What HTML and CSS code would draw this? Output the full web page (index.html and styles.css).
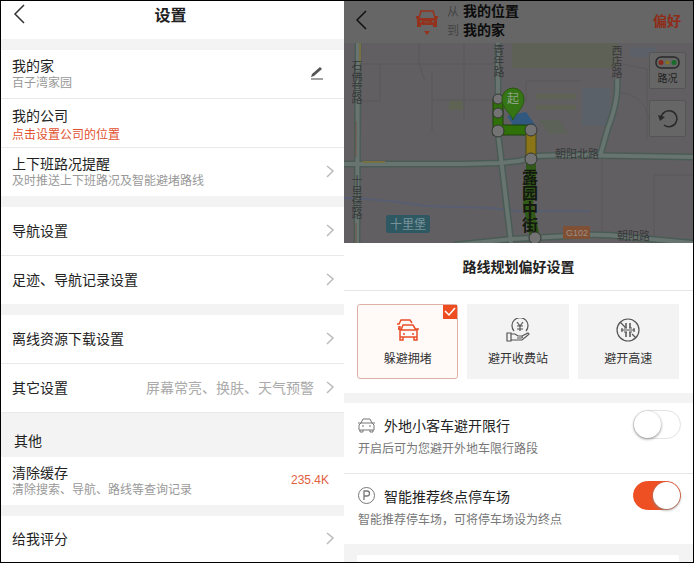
FILE: index.html
```html
<!DOCTYPE html>
<html lang="zh-CN">
  <head>
    <meta charset="utf-8">
    <title>设置</title>
    <link rel="stylesheet" href="styles.css">
  </head>
  <body>
    <svg class="defs" aria-hidden="true">
      <symbol id="back" viewBox="0 0 12 20"><path d="M11 1 2 10l9 9"/></symbol>
      <symbol id="next" viewBox="0 0 8 14"><path d="M1 2l6 5-6 6"/></symbol>
    </svg>

    <div class="settings">
      <header class="settings-header">
        <button class="back" aria-label="返回"><svg width="12" height="20"><use href="#back"/></svg></button>
        <h1>设置</h1>
      </header>

      <div class="group">
        <a class="row" href="#home">
          <span class="row-text"><b>我的家</b><small>百子湾家园</small></span>
          <svg class="edit" width="14" height="14" viewBox="0 0 14 14"><path d="M1 13h12"/><path d="M1 11l1-3 8-7 2 2-8 7z" class="solid"/></svg>
        </a>
        <a class="row row-prompt" href="#company">
          <span class="row-text"><b>我的公司</b><small>点击设置公司的位置</small></span>
        </a>
        <a class="row" href="#commute">
          <span class="row-text"><b>上下班路况提醒</b><small>及时推送上下班路况及智能避堵路线</small></span>
          <svg class="next" width="8" height="14"><use href="#next"/></svg>
        </a>
      </div>

      <div class="group">
        <a class="row" href="#navi"><b>导航设置</b><svg class="next" width="8" height="14"><use href="#next"/></svg></a>
        <a class="row" href="#history"><b>足迹、导航记录设置</b><svg class="next" width="8" height="14"><use href="#next"/></svg></a>
      </div>

      <div class="group">
        <a class="row" href="#offline"><b>离线资源下载设置</b><svg class="next" width="8" height="14"><use href="#next"/></svg></a>
        <a class="row" href="#others"><b>其它设置</b><span class="hint">屏幕常亮、换肤、天气预警</span><svg class="next" width="8" height="14"><use href="#next"/></svg></a>
      </div>

      <h2>其他</h2>
      <div class="group first">
        <a class="row row-cache" href="#cache">
          <span class="row-text"><b>清除缓存</b><small>清除搜索、导航、路线等查询记录</small></span>
          <span class="size">235.4K</span>
        </a>
      </div>
      <div class="group">
        <a class="row row-last" href="#rate"><b>给我评分</b><svg class="next" width="8" height="14"><use href="#next"/></svg></a>
      </div>
    </div>

    <div class="route">
      <header class="route-header">
        <button class="back" aria-label="返回"><svg width="12" height="20"><use href="#back"/></svg></button>
        <svg class="car" width="24" height="27" viewBox="0 0 24 27">
          <path d="M4 9 6 2h12l2 7" fill="none" stroke="#94331d" stroke-width="1.500"/>
          <path d="M1 7h3v2h16V7h3v2l-1 1v8h-4v-2H6v2H2v-8L1 9z" fill="#94331d"/>
          <circle cx="6" cy="12.500" r="1" fill="#666"/><circle cx="18" cy="12.500" r="1" fill="#666"/>
          <path d="M9 13h6" stroke="#7a5048"/><path d="M9 22h6l-3 4z" fill="#94331d"/>
        </svg>
        <dl>
          <dt>从</dt><dd>我的位置</dd>
          <dt>到</dt><dd>我的家</dd>
        </dl>
        <button class="prefer">偏好</button>
      </header>

      <div class="map">
        <svg class="map-art" viewBox="0 0 349 200" preserveAspectRatio="xMidYMid slice">
          <!-- parks and water -->
          <path d="M168 0h106v25H168z" fill="#5d6156"/>
          <path d="M286 4h26v10h-26z" fill="#5b6069"/>
          <path d="M238 45h28v38h-28z" fill="#5b6168"/>
          <path d="M192 51h40v5h-40zM192 62h40v5h-40zM105 57h14v10h-14z" fill="#5f6354"/>
          <path d="M195 77h20l10 14h-20z" fill="#5c6257"/>
          <g fill="none" stroke="#5b585d">
            <path d="M18 21h138M36 21v37H18M75 0v21l6 17M88 27v62M120 0v78M88 57h66M182 60v-22h55M273 20l30 6v70M258 115v78M310 132v63M310 132h39M275 50q30 0 32 40"/>
          </g>
          <path d="M0 155q50 2 80 8l68 2 26 3h72" fill="none" stroke="#575e72" stroke-width="2"/>
          <!-- roads -->
          <g fill="none" stroke="#4b5c56" stroke-width="7">
            <path d="M14 0l-1 200"/>
            <path d="M0 121h120l35-1 20-2 18-5 30-1 126 2"/>
            <path d="M154 0v90l13 110"/>
            <path d="M273 36q2 20-9 49l-8 28"/>
            <path d="M110 202l58-6 56-3q30-3 60 1l65 6"/>
          </g>
          <g fill="none" stroke="#67746f" stroke-width="4">
            <path d="M14 0l-1 200"/>
            <path d="M0 121h120l35-1 20-2 18-5 30-1 126 2"/>
            <path d="M154 0v90l13 110"/>
            <path d="M273 36q2 20-9 49l-8 28"/>
            <path d="M110 202l58-6 56-3q30-3 60 1l65 6"/>
          </g>
          <path d="M16 0v20M18 119h23" fill="none" stroke="#777043" stroke-width="2"/>
          <path d="M12 78v36M12 180v20" fill="none" stroke="#6e5048"/>
          <!-- road names -->
          <g class="road-name">
            <text x="13" y="17" class="down">石佛营路</text>
            <text x="13" y="132" class="down">十里堡路</text>
            <text x="155" y="1" class="down">青年路</text>
            <text x="273" y="2" class="down">西店路</text>
            <text x="211" y="115">朝阳北路</text>
            <text x="273" y="197">朝阳路</text>
          </g>
          <path d="M44 172h40q2 0 2 2v14q0 2-2 2H44q-2 0-2-2v-14q0-2 2-2z" fill="#2e5963"/>
          <text x="46" y="186" class="station">十里堡</text>
          <rect x="219" y="183" width="27" height="13" rx="1" fill="#805035"/>
          <text x="222" y="193" class="highway">G102</text>
          <!-- planned route -->
          <path d="M163 73l19-4 10 14-20 3z" fill="#315980"/>
          <path d="M154 56v31h32" fill="none" stroke="#1d400f" stroke-width="11"/>
          <path d="M154 56v31h32" fill="none" stroke="#2f7008" stroke-width="9"/>
          <path d="M187 116v25l-3 20 7 34" fill="none" stroke="#315918" stroke-width="10"/>
          <path d="M187 88v27" stroke="#47471e" stroke-width="11"/>
          <path d="M187 88v27" stroke="#8c7516" stroke-width="9"/>
          <text x="186" y="126" class="street down">露园中街</text>
          <g fill="#737373" stroke="#333834">
            <circle cx="154" cy="56" r="5"/><circle cx="154" cy="70" r="5"/><circle cx="154" cy="88" r="6"/>
            <circle cx="187" cy="87" r="6"/><circle cx="187" cy="116" r="6"/><circle cx="191" cy="195" r="6"/>
          </g>
          <path d="M169 77c-2-7-11-11-11-21a11 11 0 0 1 22 0c0 10-9 14-11 21z" fill="#357516" stroke="#29570f"/>
          <text x="163" y="60" class="start">起</text>
        </svg>
        <div class="map-tools">
          <button>
            <svg width="25" height="13" viewBox="0 0 25 13"><rect x="1" y="1" width="23" height="11" rx="5" fill="none" stroke="#292929" stroke-width="1.500"/><circle cx="6" cy="6.500" r="2.500" fill="#89291c"/><circle cx="12.500" cy="6.500" r="2" fill="#8b711a"/><circle cx="19" cy="6.500" r="2.500" fill="#176d2a"/></svg>
            路况
          </button>
          <button aria-label="刷新">
            <svg width="22" height="20" viewBox="0 0 22 20"><path d="M4 9a8 8 0 1 1 3 7" fill="none" stroke="#292929" stroke-width="1.500"/><path d="M1 6l7 2-5 4z" fill="#292929"/></svg>
          </button>
        </div>
      </div>

      <h2>路线规划偏好设置</h2>
      <div class="cards">
        <button class="card selected" aria-pressed="true">
          <svg width="24" height="24" viewBox="0 0 24 24" fill="none" stroke="currentColor" stroke-width="1.500">
            <path d="M3 12V8M1 6h2l2-4h9l2 3M3 9h2"/>
            <path d="M5 12l2-5h10l3 5M2 11h3M20 11h3M4 12h17v7H4zM4 19v3h3v-3M18 19v3h3v-3"/>
            <path d="M7 16h2M16 16h2"/>
          </svg>
          躲避拥堵
          <span class="tick"><svg width="12" height="10" viewBox="0 0 12 10"><path d="M1 4l4 4 6-7" fill="none" stroke="#fff" stroke-width="1.500"/></svg></span>
        </button>
        <button class="card" aria-pressed="false">
          <svg width="24" height="24" viewBox="0 0 24 24" fill="none" stroke="#555" stroke-width="1.200">
            <path d="M8 13a8 8 0 1 1 12 0"/><path d="M11 4l3 4 3-4M11 8h6M11 11h6M14 8v5"/>
            <path d="M1 15h4v8H1zM5 16h4l3 2h4q1 2-1 2h-4M16 18l6-3q2 1 0 2l-6 5H5"/>
          </svg>
          避开收费站
        </button>
        <button class="card" aria-pressed="false">
          <svg width="24" height="24" viewBox="0 0 24 24" fill="none" stroke="#555" stroke-width="1.200">
            <circle cx="12" cy="12" r="11"/><path d="M4 4l5 5M16 16l4 4M5 12h14M6 10v4M18 10v4"/>
            <path d="M10 5v5M14 5v5M10 14v5M14 14v5" stroke-width="1.500"/><path d="M8 10h3M13 10h3M8 14h3M13 14h3"/>
          </svg>
          避开高速
        </button>
      </div>

      <div class="options">
        <div class="option">
          <label for="limit">
            <svg width="17" height="16" viewBox="0 0 17 16" fill="none" stroke="#777"><path d="M3 6l2-4h7l2 4M0 6h3M14 6h3M1 13V8l2-2h11l2 2v5zM2 13v2h3v-2M12 13v2h3v-2M4 9h2M11 9h2"/></svg>
            外地小客车避开限行
          </label>
          <input type="checkbox" id="limit">
          <p>开启后可为您避开外地车限行路段</p>
        </div>
        <div class="option">
          <label for="parking">
            <svg width="17" height="17" viewBox="0 0 17 17" fill="none" stroke="#777"><circle cx="8.500" cy="8.500" r="8"/><path d="M6 13V4h3a2.500 2.500 0 0 1 0 5H6" stroke-width="1.300"/></svg>
            智能推荐终点停车场
          </label>
          <input type="checkbox" id="parking" checked>
          <p>智能推荐停车场，可将停车场设为终点</p>
        </div>
      </div>
      <div class="more"></div>
    </div>
  </body>
</html>
```

FILE: styles.css
```css
* {
  box-sizing: border-box;
}
body {
  display: grid;
  grid-template-columns: 343fr 349fr;
  min-height: 100vh;
  margin: 0;
  border: 1px solid #000;
  background-color: #fff;
  color: #222;
  font-family: "Noto Sans CJK SC", "Liberation Sans", sans-serif;
  font-size: 14px;
  line-height: 18px;
}
h1, h2, p, dl, dd {
  margin: 0;
}
button {
  padding: 0;
  border: 0;
  background: none;
  color: inherit;
  font: inherit;
}
svg {
  display: block;
  flex: none;
}
.defs {
  position: absolute;
  width: 0;
  height: 0;
}
.back svg {
  fill: none;
  stroke: #333;
  stroke-width: 1.5;
}

/* settings list */
.settings {
  display: flex;
  flex-direction: column;
  min-width: 0;
}
.settings-header {
  display: grid;
  grid-template-columns: 12px 1fr 16px;
  padding: 3px 12px 15px;
}
.settings-header h1 {
  font-size: 16px;
  line-height: 20px;
  text-align: center;
}
.group {
  border-top: 11px solid #f3f3f3;
}
.group.first {
  border-top: 0;
}
.row {
  display: flex;
  align-items: center;
  min-height: 48px;
  padding: 0 10px 2px 11px;
  color: #222;
  text-decoration: none;
}
.row + .row {
  min-height: 49px;
  border-top: 1px solid #e9e9e9;
}
.row b {
  font-weight: 400;
}
.row-text {
  display: flex;
  flex-direction: column;
}
.row small {
  color: #999;
  font-size: 12px;
  line-height: 16px;
}
.row-prompt {
  padding-top: 4px;
}
.row-prompt .row-text {
  gap: 2px;
}
.row-prompt small {
  color: #e2512f;
}
.row-last {
  min-height: 46px;
}
.edit {
  margin-left: auto;
  margin-right: 10px;
  fill: none;
  stroke: #444;
}
.edit .solid {
  fill: #555;
  stroke: none;
}
.next {
  margin-left: auto;
  fill: none;
  stroke: #bbb;
  stroke-width: 1.5;
}
.hint {
  margin-left: auto;
  color: #aaa;
}
.hint + .next {
  margin-left: 12px;
}
.row-cache {
  padding-right: 15px;
}
.size {
  margin-left: auto;
  color: #e2603f;
  font-family: "Liberation Sans", sans-serif;
  font-size: 12px;
}
.settings h2 {
  padding: 18px 13px 8px;
  border-top: 1px solid #e9e9e9;
  background-color: #f3f3f3;
  font-size: 14px;
  font-weight: 400;
}

/* route page behind the sheet */
.route {
  display: flex;
  flex-direction: column;
  min-width: 0;
}
.route-header {
  display: flex;
  align-items: center;
  height: 42px;
  padding: 0 12px 4px 11px;
  background-color: #666;
}
.route-header .back svg {
  stroke: #111;
}
.car {
  margin: 4px 8px 0 48px;
}
.route-header dl {
  display: grid;
  grid-template-columns: 12px auto;
  column-gap: 4px;
  line-height: 19px;
}
.route-header dt {
  color: #444;
  font-size: 12px;
}
.route-header dd {
  color: #0c0c0c;
  font-weight: 700;
}
.prefer {
  margin-left: auto;
  color: #8f2c18;
  font-weight: 700;
}
.map {
  position: relative;
  height: 200px;
  background-color: #625f63;
}
.map-art {
  width: 100%;
  height: 100%;
}
.map-art .down {
  writing-mode: vertical-rl;
}
.road-name {
  fill: #39383a;
  font-size: 11px;
}
.station {
  fill: #78939a;
  font-size: 12px;
}
.highway {
  fill: #a08e82;
  font-family: "Liberation Sans", sans-serif;
  font-size: 9px;
}
.street {
  fill: #14190f;
  font-size: 16px;
  font-weight: 700;
}
.start {
  fill: #8fa486;
  font-size: 12px;
}
.map-tools {
  position: absolute;
  top: 9px;
  right: 7px;
  display: flex;
  flex-direction: column;
  gap: 11px;
}
.map-tools button {
  display: flex;
  flex-direction: column;
  align-items: center;
  justify-content: center;
  gap: 2px;
  width: 37px;
  height: 37px;
  border: 1px solid #555;
  border-radius: 2px;
  background-color: #666;
  color: #222;
  font-size: 10px;
  line-height: 14px;
}

/* preference sheet */
.route h2 {
  padding: 14px 0 15px;
  border-bottom: 1px solid #e6e6e6;
  font-size: 14px;
  text-align: center;
}
.cards {
  display: grid;
  grid-template-columns: repeat(3, 1fr);
  gap: 9px;
  padding: 13px 14px 14px 13px;
}
.card {
  position: relative;
  display: flex;
  flex-direction: column;
  align-items: center;
  gap: 7px;
  padding: 13px 0 11px;
  border: 1px solid #f3f3f3;
  background-color: #f3f3f3;
  color: #333;
  font-size: 12px;
}
.card.selected {
  border-color: #dfb1a6;
  border-radius: 3px;
  background-color: #fffaf8;
}
.card.selected > svg {
  color: #e84e27;
}
.tick {
  position: absolute;
  top: 0;
  right: 0;
  padding: 2px 1px;
  background-color: #ee4d22;
}
.options {
  border-top: 10px solid #f3f3f3;
}
.option {
  display: grid;
  grid-template-columns: 1fr auto;
  align-items: center;
  padding: 7px 12px 16px 14px;
}
.option + .option {
  border-top: 1px solid #e6e6e6;
}
.option label {
  display: flex;
  align-items: center;
  gap: 9px;
}
.option p {
  color: #777;
  font-size: 12px;
}
.option input {
  appearance: none;
  width: 48px;
  height: 29px;
  margin: 0;
  border: 1px solid #e2e2e2;
  border-radius: 15px;
}
.option input::before {
  content: "";
  display: block;
  width: 27px;
  height: 27px;
  border-radius: 50%;
  background-color: #fff;
  box-shadow: 0 1px 3px #888;
}
.option input:checked {
  border-color: #ee5023;
  background-color: #ee5023;
}
.option input:checked::before {
  margin-left: auto;
}
.more {
  flex: 1;
  min-height: 18px;
  border: solid #f3f3f3;
  border-width: 11px 14px 0 13px;
  background-color: #fff;
}
```
